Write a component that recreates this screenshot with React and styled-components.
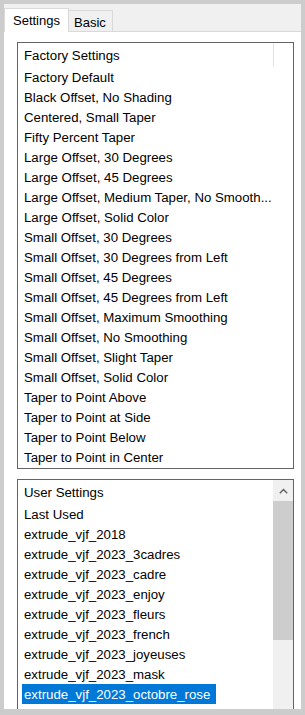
import React from "react";
import styled, { createGlobalStyle } from "styled-components";

const Global = createGlobalStyle`
  html, body { margin: 0; padding: 0; background: #cccccc; }
  body { font-family: "Liberation Sans", Arial, sans-serif; font-size: 13.25px; color: #000; }
`;

const Window = styled.div`
  width: 305px;
  height: 715px;
  box-sizing: border-box;
  padding: 4px 4px 6px 4px;
  background: #cccccc;
  display: flex;
  flex-direction: column;
`;

const TabStrip = styled.div`
  height: 27px;
  flex: none;
  background: #f0f0f0;
  border-bottom: 1px solid #d9d9d9;
  display: flex;
  align-items: flex-end;
`;

const Tab = styled.div`
  box-sizing: border-box;
  height: ${(p) => (p.$active ? "24px" : "21px")};
  margin-bottom: ${(p) => (p.$active ? "-1px" : "0")};
  padding: ${(p) => (p.$active ? "4px 8px 0 8px" : "4px 6px 0 5px")};
  background: ${(p) => (p.$active ? "#ffffff" : "#f0f0f0")};
  border: 1px solid #d9d9d9;
  border-bottom: none;
  border-left: ${(p) => (p.$active ? "1px solid #d9d9d9" : "none")};
  line-height: 15px;
  font-size: 13px;
  white-space: nowrap;
`;

const Panel = styled.div`
  flex: 1;
  min-height: 0;
  background: #ffffff;
  padding: 10px 7px 0 13px;
  display: flex;
  flex-direction: column;
  gap: 10px;
  overflow: hidden;
`;

const ListBox = styled.div`
  flex: none;
  border: 1px solid #646464;
  background: #fff;
  position: relative;
  height: ${(p) => p.$h}px;
  box-sizing: border-box;
  overflow: hidden;
`;

const Header = styled.div`
  height: 24px;
  display: flex;
`;

const HeaderCell = styled.div`
  flex: 1;
  box-sizing: border-box;
  padding: 2px 0 0 6px;
  line-height: 22px;
  border-right: ${(p) => (p.$divider ? "1px solid #e3e3e3" : "none")};
`;

const HeaderSpacer = styled.div`
  width: 19px;
`;

const Row = styled.div`
  height: 20px;
  padding-left: 4px;
  white-space: nowrap;
`;

const Label = styled.span`
  display: inline-block;
  box-sizing: border-box;
  height: 20px;
  padding: 2px 6px 0 2px;
  line-height: 18px;
  background: ${(p) => (p.$sel ? "#0078d7" : "transparent")};
  color: ${(p) => (p.$sel ? "#ffffff" : "#000000")};
`;

const ScrollBar = styled.div`
  position: absolute;
  top: 0;
  right: 0;
  bottom: 0;
  width: 20px;
  background: #f0f0f0;
  display: flex;
  flex-direction: column;
`;

const ArrowButton = styled.div`
  height: 21px;
  display: flex;
  align-items: center;
  justify-content: center;
`;

const Thumb = styled.div`
  height: 139px;
  background: #cdcdcd;
`;

const factory = [
  "Factory Default",
  "Black Offset, No Shading",
  "Centered, Small Taper",
  "Fifty Percent Taper",
  "Large Offset, 30 Degrees",
  "Large Offset, 45 Degrees",
  "Large Offset, Medium Taper, No Smooth...",
  "Large Offset, Solid Color",
  "Small Offset, 30 Degrees",
  "Small Offset, 30 Degrees from Left",
  "Small Offset, 45 Degrees",
  "Small Offset, 45 Degrees from Left",
  "Small Offset, Maximum Smoothing",
  "Small Offset, No Smoothing",
  "Small Offset, Slight Taper",
  "Small Offset, Solid Color",
  "Taper to Point Above",
  "Taper to Point at Side",
  "Taper to Point Below",
  "Taper to Point in Center",
];

const user = [
  "Last Used",
  "extrude_vjf_2018",
  "extrude_vjf_2023_3cadres",
  "extrude_vjf_2023_cadre",
  "extrude_vjf_2023_enjoy",
  "extrude_vjf_2023_fleurs",
  "extrude_vjf_2023_french",
  "extrude_vjf_2023_joyeuses",
  "extrude_vjf_2023_mask",
  "extrude_vjf_2023_octobre_rose",
  "extrude_vjf_2023_paques",
];

export default function App() {
  return (
    <>
      <Global />
      <Window>
        <TabStrip>
          <Tab $active>Settings</Tab>
          <Tab>Basic</Tab>
        </TabStrip>
        <Panel>
          <ListBox $h={427}>
            <Header>
              <HeaderCell $divider>Factory Settings</HeaderCell>
              <HeaderSpacer />
            </Header>
            {factory.map((t) => (
              <Row key={t}>
                <Label>{t}</Label>
              </Row>
            ))}
          </ListBox>
          <ListBox $h={300}>
            <Header>
              <HeaderCell>User Settings</HeaderCell>
            </Header>
            {user.map((t) => (
              <Row key={t}>
                <Label $sel={t === "extrude_vjf_2023_octobre_rose"}>{t}</Label>
              </Row>
            ))}
            <ScrollBar>
              <ArrowButton>
                <svg width="9" height="6" viewBox="0 0 9 6">
                  <path d="M0.8 5.2 L4.5 1.5 L8.2 5.2" fill="none" stroke="#606060" strokeWidth="1.4" />
                </svg>
              </ArrowButton>
              <Thumb />
            </ScrollBar>
          </ListBox>
        </Panel>
      </Window>
    </>
  );
}
